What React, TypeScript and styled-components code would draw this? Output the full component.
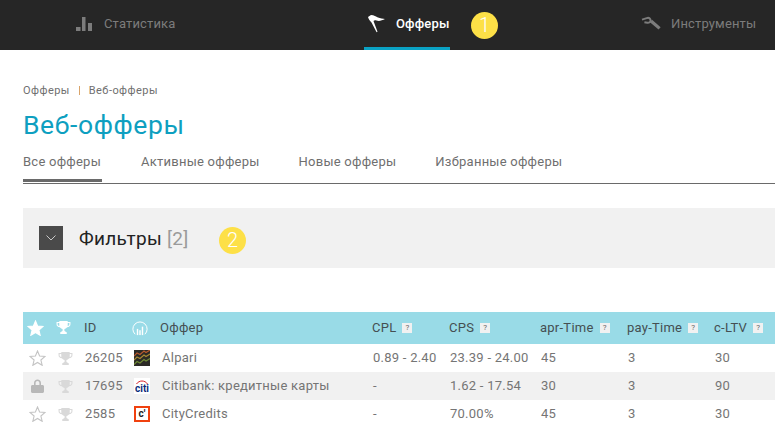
import * as React from 'react';
import styled, { createGlobalStyle } from 'styled-components';

const GlobalStyle = createGlobalStyle`
  html, body { margin: 0; padding: 0; background: #fff; overflow: hidden; }
  body { font-family: Roboto, "Open Sans", "Liberation Sans", sans-serif; }
`;

const Page = styled.div`
  position: relative;
  width: 775px;
  height: 428px;
  overflow: hidden;
`;

const Nav = styled.nav`
  display: grid;
  grid-template-columns: 288px 277px 1fr;
  height: 50px;
  padding-left: 76px;
  background: #262626;
`;

const NavItem = styled.a<{ $active?: boolean; $gap: number }>`
  display: flex;
  align-items: center;
  justify-self: start;
  gap: ${p => p.$gap}px;
  height: 47px;
  padding-left: ${p => (p.$active ? 4 : 0)}px;
  font-size: 13px;
  letter-spacing: 0.15px;
  color: ${p => (p.$active ? '#fff' : '#7c7c7c')};
  font-weight: ${p => (p.$active ? 500 : 400)};
  border-bottom: 3px solid ${p => (p.$active ? '#0aa2c4' : 'transparent')};
`;

const Marker = styled.span<{ $x: number; $y: number }>`
  position: absolute;
  left: ${p => p.$x}px;
  top: ${p => p.$y}px;
  width: 27px;
  height: 27px;
  border-radius: 50%;
  background: #fde047;
  color: #fff;
  font-size: 20px;
  font-weight: 300;
  line-height: 27px;
  text-align: center;
`;

const Content = styled.main`
  padding: 34px 0 0 23px;
`;

const Crumbs = styled.div`
  display: flex;
  align-items: center;
  gap: 9px;
  height: 13px;
  font-size: 11px;
  letter-spacing: 0.45px;
  color: #6f6f6f;
`;

const CrumbSep = styled.span`
  width: 1px;
  height: 9px;
  background: #d9a46a;
`;

const Title = styled.h1`
  margin: 13px 0 0;
  font-size: 26.5px;
  line-height: 30px;
  font-weight: 400;
  letter-spacing: 0.6px;
  color: #0e9fc0;
`;

const Tabs = styled.div`
  display: flex;
  gap: 39px;
  height: 34px;
  margin-top: 9px;
  border-bottom: 1px solid #6a6a6a;
`;

const Tab = styled.a<{ $active?: boolean }>`
  height: 33px;
  padding-right: ${p => (p.$active ? 1 : 0)}px;
  line-height: 26px;
  font-size: 13px;
  letter-spacing: 0.24px;
  color: #6f6f6f;
  box-shadow: ${p => (p.$active ? 'inset 0 -3px 0 #6a6a6a' : 'none')};
`;

const FilterPanel = styled.section`
  display: flex;
  align-items: center;
  gap: 16px;
  height: 60px;
  margin-top: 24px;
  padding-left: 16px;
  background: #f1f1f1;
`;

const FilterToggle = styled.span`
  display: flex;
  align-items: center;
  justify-content: center;
  width: 24px;
  height: 24px;
  background: #4a4a4a;
`;

const FilterLabel = styled.span`
  font-size: 19px;
  letter-spacing: 0.3px;
  color: #222;
`;

const FilterCount = styled.span`
  color: #9a9a9a;
`;

const Table = styled.div`
  margin-top: 44px;
  font-size: 13px;
  letter-spacing: 0.25px;
`;

const COLUMNS = '28px 33px 50px 26px 212px 77px 91px 87px 87px 1fr';

const HeadRow = styled.div`
  display: grid;
  grid-template-columns: ${COLUMNS};
  align-items: center;
  height: 32px;
  padding-bottom: 1px;
  box-sizing: border-box;
  background: #99dbe7;
  color: #454f52;
`;

const Row = styled.div<{ $shaded?: boolean }>`
  display: grid;
  grid-template-columns: ${COLUMNS};
  align-items: center;
  height: 28px;
  background: ${p => (p.$shaded ? '#f1f1f1' : '#fff')};
  color: #757575;
`;

const HeadCell = styled.div`
  display: flex;
  align-items: center;
  gap: 6px;
  white-space: nowrap;
`;

const Cell = styled.div<{ $pad?: number }>`
  padding-left: ${p => p.$pad ?? 1}px;
  padding-bottom: 2px;
  white-space: nowrap;
`;

const IconCell = styled.div<{ $nudge?: number }>`
  display: flex;
  align-items: center;
  justify-content: center;
  height: 100%;
  padding-right: ${p => p.$nudge ?? 0}px;
`;

const Help = styled.span`
  display: inline-block;
  width: 10px;
  height: 10px;
  background: #f1f1f1;
  color: #666;
  font-size: 8px;
  line-height: 10px;
  text-align: center;
  letter-spacing: 0;
`;

const LogoBox = styled.div`
  display: flex;
  align-items: center;
  justify-content: flex-start;
`;

const CitiMark = styled.span`
  position: relative;
  display: block;
  width: 16px;
  height: 16px;
  background: #fff;
  color: #0a2a7a;
  font-size: 10px;
  font-weight: 700;
  line-height: 21px;
  letter-spacing: 0;
  text-align: center;
`;

const CitiArc = styled.svg`
  position: absolute;
  left: 0;
  top: 1px;
`;

const CreditsMark = styled.span`
  display: block;
  box-sizing: border-box;
  width: 16px;
  height: 16px;
  border: 2px solid #f0410f;
  background: #fff;
  color: #222;
  font-size: 10px;
  font-weight: 700;
  line-height: 11px;
  letter-spacing: 0;
  text-align: center;
`;

const SignalSvg = styled.svg`
  margin-left: -2px;
`;

const BarsIcon = () => (
  <svg width="16" height="14" viewBox="0 0 16 14" fill="#7c7c7c">
    <rect x="0" y="10" width="4.5" height="4" />
    <rect x="6" y="0" width="3.5" height="14" />
    <rect x="12" y="6" width="4" height="8" />
  </svg>
);

const FlagIcon = () => (
  <svg width="17" height="18" viewBox="0 0 17 18" fill="#fff">
    <path d="M0 2 L3 0 C6 0 8 1.5 10 2.5 C12 3.5 15 3.5 17 4 C14 5.5 11 6.5 8.5 5.5 C7 5 6 5.5 5.5 6 L9.5 16.8 L8.6 17.2 L3.5 7.5 C2 6 0.5 4 0 2 Z" />
  </svg>
);

const WrenchIcon = () => (
  <svg width="20" height="15" viewBox="0 0 20 15" fill="none" stroke="#7c7c7c" strokeWidth="3.2" strokeLinejoin="round">
    <path d="M10 5 L18.6 12.4" />
    <path d="M1 3.6 L6.5 1.9 C8.4 1.6 9.5 3 9.6 4.6 C9.6 6 8.2 7 6.4 6.8 L3.4 6.2" strokeWidth="2" />
  </svg>
);

const Chevron = () => (
  <svg width="10" height="6" viewBox="0 0 10 6" fill="none" stroke="#c9c9c9" strokeWidth="1">
    <path d="M0.5 0.5 L5 5 L9.5 0.5" />
  </svg>
);

const StarIcon = ({ filled }: { filled?: boolean }) => (
  <svg width="17" height="16" viewBox="0 0 24 23" fill={filled ? '#fff' : 'none'} stroke={filled ? '#fff' : '#c4c4c4'} strokeWidth="1.6" strokeLinejoin="miter">
    <path d="M12 1.5 L15 8.7 L22.8 9.3 L16.9 14.4 L18.7 22 L12 17.9 L5.3 22 L7.1 14.4 L1.2 9.3 L9 8.7 Z" />
  </svg>
);

const TrophyIcon = ({ color }: { color: string }) => (
  <svg width="15" height="13" viewBox="0 0 15 14" fill={color}>
    <path d="M3 0 H12 V1 H15 V3.5 C15 5.5 13.5 6.5 11.5 6.8 C10.8 7.8 9.8 8.3 8.5 8.6 V10.5 C9 11.3 10 11.7 11 12 V14 H4 V12 C5 11.7 6 11.3 6.5 10.5 V8.6 C5.2 8.3 4.2 7.8 3.5 6.8 C1.5 6.5 0 5.5 0 3.5 V1 H3 Z M1.2 2.2 V3.5 C1.2 4.5 2 5.2 3 5.5 L2.9 2.2 Z M13.8 2.2 H12.1 L12 5.5 C13 5.2 13.8 4.5 13.8 3.5 Z" fillRule="evenodd" />
  </svg>
);

const LockIcon = () => (
  <svg width="13" height="14" viewBox="0 0 13 14" fill="#b8b8b8">
    <path d="M3 6 V4 C3 1.8 4.6 0.5 6.5 0.5 C8.4 0.5 10 1.8 10 4 V6 H11.5 C12.3 6 13 6.6 13 7.4 V12.5 C13 13.3 12.3 14 11.5 14 H1.5 C0.7 14 0 13.3 0 12.5 V7.4 C0 6.6 0.7 6 1.5 6 Z M4.6 6 H8.4 V4 C8.4 2.8 7.6 2 6.5 2 C5.4 2 4.6 2.8 4.6 4 Z" fillRule="evenodd" />
  </svg>
);

const SignalIcon = () => (
  <SignalSvg width="16" height="16" viewBox="0 0 18 18" fill="none" stroke="#fff" strokeWidth="1.1">
    <path d="M3.5 16 A8 8 0 1 1 14.5 16" />
    <rect x="5.4" y="10" width="1.6" height="7" fill="#fff" stroke="none" />
    <rect x="8.2" y="11.5" width="1.6" height="5.5" fill="#fff" stroke="none" />
    <rect x="11" y="7.5" width="1.6" height="9.5" fill="#fff" stroke="none" />
  </SignalSvg>
);

const AlpariLogo = () => (
  <svg width="16" height="16" viewBox="0 0 16 16">
    <rect width="16" height="16" fill="#2c2a26" />
    <path d="M0 6 L3 3 L6 4.5 L10 1 L12 2.5 L16 0" fill="none" stroke="#b9592c" strokeWidth="1.1" />
    <path d="M0 10 L3 7 L6 8.5 L10 5 L12 6.5 L16 4" fill="none" stroke="#a98a32" strokeWidth="1.1" />
    <path d="M0 14.5 L3 11.5 L6 13 L10 9.5 L12 11 L16 8.5" fill="none" stroke="#6f8a35" strokeWidth="1.1" />
  </svg>
);

const CitiLogo = () => (
  <CitiMark>
    <CitiArc width="16" height="6" viewBox="0 0 16 6" fill="none" stroke="#d8232a" strokeWidth="1">
      <path d="M2.5 5 C5 1 11 1 13.5 5" />
    </CitiArc>
    citi
  </CitiMark>
);

type Offer = {
  id: string;
  name: string;
  logo: React.ReactNode;
  locked?: boolean;
  cpl: string;
  cps: string;
  apr: string;
  pay: string;
  ltv: string;
};

const offers: Offer[] = [
  { id: '26205', name: 'Alpari', logo: <AlpariLogo />, cpl: '0.89 - 2.40', cps: '23.39 - 24.00', apr: '45', pay: '3', ltv: '30' },
  { id: '17695', name: 'Citibank: кредитные карты', logo: <CitiLogo />, locked: true, cpl: '-', cps: '1.62 - 17.54', apr: '30', pay: '3', ltv: '90' },
  { id: '2585', name: 'CityCredits', logo: <CreditsMark>c'</CreditsMark>, cpl: '-', cps: '70.00%', apr: '45', pay: '3', ltv: '30' },
];

const tabs = ['Все офферы', 'Активные офферы', 'Новые офферы', 'Избранные офферы'];

export default function App() {
  return (
    <Page>
      <GlobalStyle />
      <Nav>
        <NavItem $gap={12}><BarsIcon />Статистика</NavItem>
        <NavItem $active $gap={11}><FlagIcon />Офферы</NavItem>
        <NavItem $gap={10}><WrenchIcon />Инструменты</NavItem>
      </Nav>
      <Marker $x={471} $y={12}>1</Marker>
      <Content>
        <Crumbs>
          <span>Офферы</span>
          <CrumbSep />
          <span>Веб-офферы</span>
        </Crumbs>
        <Title>Веб-офферы</Title>
        <Tabs>
          {tabs.map((t, i) => (
            <Tab key={t} $active={i === 0}>{t}</Tab>
          ))}
        </Tabs>
        <FilterPanel>
          <FilterToggle><Chevron /></FilterToggle>
          <FilterLabel>Фильтры <FilterCount>[2]</FilterCount></FilterLabel>
        </FilterPanel>
        <Marker $x={219} $y={227}>2</Marker>
        <Table>
          <HeadRow>
            <IconCell $nudge={4}><StarIcon filled /></IconCell>
            <IconCell $nudge={8}><TrophyIcon color="#fff" /></IconCell>
            <HeadCell>ID</HeadCell>
            <HeadCell><SignalIcon /></HeadCell>
            <HeadCell>Оффер</HeadCell>
            <HeadCell>CPL <Help>?</Help></HeadCell>
            <HeadCell>CPS <Help>?</Help></HeadCell>
            <HeadCell>apr-Time <Help>?</Help></HeadCell>
            <HeadCell>pay-Time <Help>?</Help></HeadCell>
            <HeadCell>c-LTV <Help>?</Help></HeadCell>
          </HeadRow>
          {offers.map((o, i) => (
            <Row key={o.id} $shaded={i === 1}>
              <IconCell>{o.locked ? <LockIcon /> : <StarIcon />}</IconCell>
              <IconCell $nudge={4}><TrophyIcon color="#d9d9d9" /></IconCell>
              <Cell>{o.id}</Cell>
              <LogoBox>{o.logo}</LogoBox>
              <Cell $pad={2}>{o.name}</Cell>
              <Cell>{o.cpl}</Cell>
              <Cell>{o.cps}</Cell>
              <Cell>{o.apr}</Cell>
              <Cell>{o.pay}</Cell>
              <Cell>{o.ltv}</Cell>
            </Row>
          ))}
        </Table>
      </Content>
    </Page>
  );
}
